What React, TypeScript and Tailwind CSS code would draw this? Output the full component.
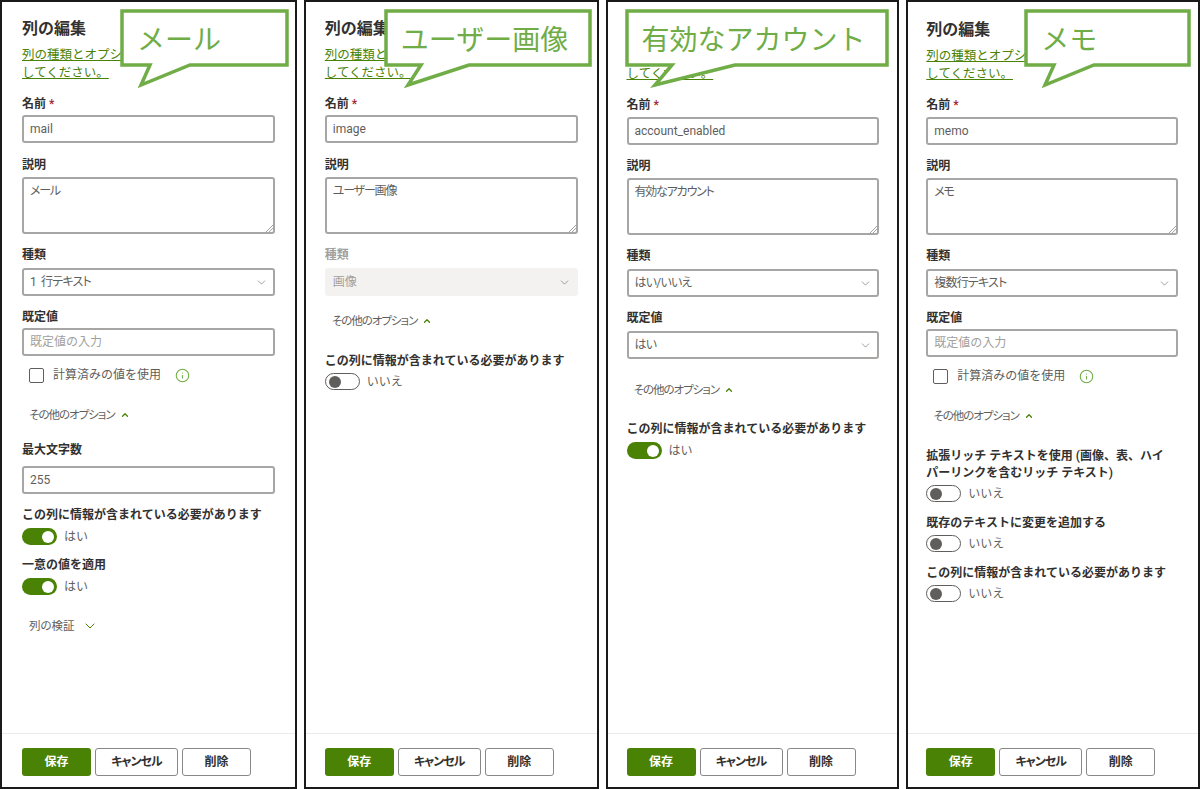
import { ChevronDown, ChevronUp, Info } from 'lucide-react';
import type { ReactNode } from 'react';

const labelClass = 'text-[12px] leading-[16px] font-semibold text-[#323130]';
const boxClass = 'border-2 border-[#a8a6a4] rounded-[3px] bg-white px-[6px] text-[12px] flex items-center';
const palt = '[font-feature-settings:"palt"]';

function Label({ children, className = '' }: { children: ReactNode; className?: string }) {
  return <div className={`${labelClass} ${className}`}>{children}</div>;
}

function TextBox({ value, className = '', muted = false }: { value: string; className?: string; muted?: boolean }) {
  return (
    <div className={`${boxClass} h-[28px] ${muted ? 'text-[#a19f9d]' : 'text-[#605e5c]'} ${className}`}>{value}</div>
  );
}

function TextArea({ value }: { value: string }) {
  return (
    <div className={`relative mt-[4px] h-[57px] border-2 border-[#a8a6a4] rounded-[3px] px-[6px] pt-[4px] text-[12px] leading-[16px] tracking-[-1.2px] text-[#605e5c] ${palt}`}>
      {value}
      <svg className="absolute right-0 bottom-0 w-[8px] h-[8px]" viewBox="0 0 8 8">
        <path d="M1 8 8 1M4 8 8 4" stroke="#8a8886" strokeWidth="0.8" />
      </svg>
    </div>
  );
}

function Select({ value, disabled = false }: { value: string; disabled?: boolean }) {
  return (
    <div
      className={`mt-[5px] h-[28px] rounded-[3px] text-[12px] flex items-center justify-between ${palt} ${
        disabled ? 'pl-[8px] pr-[7px] bg-[#f3f2f1] text-[#a19f9d]' : 'pl-[6px] pr-[5px] border-2 border-[#a8a6a4] text-[#605e5c] tracking-[-0.8px] [word-spacing:3px]'
      }`}
    >
      <span>{value}</span>
      <ChevronDown className="h-[13px] w-[13px] text-[#8a8886]" strokeWidth={1.5} />
    </div>
  );
}

function Toggle({ on, className = 'mt-[5px]' }: { on: boolean; className?: string }) {
  return (
    <div className={`flex items-center gap-[7px] h-[17px] ${className}`}>
      {on ? (
        <div className="w-[35px] h-[17px] rounded-full bg-[#498205] flex items-center justify-end pr-[3px]">
          <div className="w-[12px] h-[12px] rounded-full bg-white" />
        </div>
      ) : (
        <div className="w-[35px] h-[17px] rounded-full border border-[#605e5c] bg-white flex items-center pl-[3px]">
          <div className="w-[12px] h-[12px] rounded-full bg-[#605e5c]" />
        </div>
      )}
      <span className="text-[12px] text-[#605e5c]">{on ? 'はい' : 'いいえ'}</span>
    </div>
  );
}

function MoreOptions({ className = '' }: { className?: string }) {
  return (
    <div className={`flex items-center gap-[5px] pl-[7px] text-[11.5px] leading-[16px] tracking-[-1px] text-[#605e5c] ${palt} ${className}`}>
      <span>その他のオプション</span>
      <ChevronUp className="h-[10px] w-[10px] text-[#498205]" strokeWidth={3} />
    </div>
  );
}

function Computed() {
  return (
    <div className="mt-[11px] ml-[7px] flex items-center h-[16px]">
      <div className="w-[15px] h-[15px] border border-[#605e5c] rounded-[2px]" />
      <span className="ml-[9px] text-[12px] text-[#605e5c]">計算済みの値を使用</span>
      <Info className="ml-[14px] h-[15px] w-[15px] text-[#70ad47]" strokeWidth={1.75} />
    </div>
  );
}

function Callout({ text, left, width, tail }: { text: string; left: number; width: number; tail: [number, number, number] }) {
  const [a, b, c] = tail;
  return (
    <div className="absolute top-[7px] h-[84px]" style={{ left, width }}>
      <svg className="absolute inset-0 w-full h-full" viewBox={`0 0 ${width} 84`}>
        <path
          d={`M2 2H${width - 2}V56H${c}L${b} 76 ${a} 56H2Z`}
          fill="#fff"
          stroke="#70ad47"
          strokeWidth="3.5"
        />
      </svg>
      <div className="absolute left-[17px] top-[12px] text-[28px] leading-[40px] whitespace-nowrap text-[#70ad47]">{text}</div>
    </div>
  );
}

function Panel({ className, children, inset, callout }: { className: string; children: ReactNode; inset: string; callout: ReactNode }) {
  return (
    <div className={`relative h-full bg-white border-2 border-[#1a1a1a] flex flex-col ${className}`}>
      <div className={`flex-1 ${inset}`}>
        <div className="text-[16px] leading-[22px] font-semibold text-[#323130]">列の編集</div>
        <div className="mt-[6px] text-[12.5px] leading-[18px] text-[#498205] underline">
          列の種類とオプションを確認してから、
          <br />
          してください。
        </div>
        {children}
      </div>
      <div className={`h-[39px] box-content border-t border-[#edebe9] flex items-start gap-[4px] pt-[14px] ${palt}`}>
        <div className="w-[69px] h-[28px] rounded-[3px] bg-[#498205] text-white text-[12px] font-semibold flex items-center justify-center">保存</div>
        <div className="w-[83px] h-[28px] rounded-[3px] border border-[#8a8886] text-[#323130] text-[12px] tracking-[-1px] font-semibold flex items-center justify-center">キャンセル</div>
        <div className="w-[69px] h-[28px] rounded-[3px] border border-[#8a8886] text-[#323130] text-[12px] font-semibold flex items-center justify-center">削除</div>
      </div>
      {callout}
    </div>
  );
}

function NameLabel() {
  return <Label className="mt-[14px]">名前 <span className="text-[#a4262c]">*</span></Label>;
}

export default function App() {
  return (
    <div className="w-[1200px] h-[789px] bg-white flex gap-[7px] overflow-hidden" style={{ fontFamily: 'Roboto, "Noto Sans CJK JP", sans-serif' }}>
      <Panel
        className="w-[297px] [&>div:nth-child(2)]:pl-[20px]"
        inset="pl-[20px] pr-[20px] pt-[16px]"
        callout={<Callout text="メール" left={118} width={169} tail={[30, 21, 70]} />}
      >
        <NameLabel />
        <TextBox value="mail" className="mt-[3px]" />
        <Label className="mt-[14px]">説明</Label>
        <TextArea value="メール" />
        <Label className="mt-[13px]">種類</Label>
        <Select value="1 行テキスト" />
        <Label className="mt-[13px]">既定値</Label>
        <TextBox value="既定値の入力" className="mt-[3px]" muted />
        <Computed />
        <MoreOptions className="mt-[24px]" />
        <Label className="mt-[19px]">最大文字数</Label>
        <TextBox value="255" className="mt-[8px]" />
        <Label className="mt-[13px]">この列に情報が含まれている必要があります</Label>
        <Toggle on />
        <Label className="mt-[12px]">一意の値を適用</Label>
        <Toggle on />
        <div className={`mt-[23px] flex items-center gap-[7px] pl-[7px] text-[11.5px] leading-[16px] text-[#605e5c] ${palt}`}>
          <span>列の検証</span>
          <ChevronDown className="h-[16px] w-[16px] text-[#498205]" strokeWidth={1.5} />
        </div>
      </Panel>
      <Panel
        className="w-[295px] [&>div:nth-child(2)]:pl-[19px]"
        inset="pl-[19px] pr-[19px] pt-[16px]"
        callout={<Callout text="ユーザー画像" left={78} width={208} tail={[37, 24, 85]} />}
      >
        <NameLabel />
        <TextBox value="image" className="mt-[3px]" />
        <Label className="mt-[14px]">説明</Label>
        <TextArea value="ユーザー画像" />
        <Label className="mt-[13px] !text-[#a19f9d]">種類</Label>
        <Select value="画像" disabled />
        <MoreOptions className="mt-[17px]" />
        <Label className="mt-[24px]">この列に情報が含まれている必要があります</Label>
        <Toggle on={false} className="mt-[4px]" />
      </Panel>
      <Panel
        className="w-[294px] [&>div:nth-child(2)]:pl-[19px]"
        inset="pl-[19px] pr-[18px] pt-[17px]"
        callout={<Callout text="有効なアカウント" left={17} width={264} tail={[47, 30, 110]} />}
      >
        <NameLabel />
        <TextBox value="account_enabled" className="mt-[4px]" />
        <Label className="mt-[13px]">説明</Label>
        <TextArea value="有効なアカウント" />
        <Label className="mt-[13px]">種類</Label>
        <Select value="はい/いいえ" />
        <Label className="mt-[13px]">既定値</Label>
        <Select value="はい" />
        <MoreOptions className="mt-[23px]" />
        <Label className="mt-[23px]">この列に情報が含まれている必要があります</Label>
        <Toggle on />
      </Panel>
      <Panel
        className="w-[294px] [&>div:nth-child(2)]:pl-[18px]"
        inset="pl-[18px] pr-[20px] pt-[17px]"
        callout={<Callout text="メモ" left={116} width={167} tail={[30, 21, 70]} />}
      >
        <NameLabel />
        <TextBox value="memo" className="mt-[4px]" />
        <Label className="mt-[13px]">説明</Label>
        <TextArea value="メモ" />
        <Label className="mt-[13px]">種類</Label>
        <Select value="複数行テキスト" />
        <Label className="mt-[13px]">既定値</Label>
        <TextBox value="既定値の入力" className="mt-[3px]" muted />
        <Computed />
        <MoreOptions className="mt-[24px]" />
        <div className="mt-[24px] text-[12px] leading-[17px] font-semibold text-[#323130]">
          拡張リッチ テキストを使用 (画像、表、ハイ
          <br />
          パーリンクを含むリッチ テキスト)
        </div>
        <Toggle on={false} className="mt-[3px]" />
        <Label className="mt-[13px]">既存のテキストに変更を追加する</Label>
        <Toggle on={false} className="mt-[4px]" />
        <Label className="mt-[13px]">この列に情報が含まれている必要があります</Label>
        <Toggle on={false} className="mt-[4px]" />
      </Panel>
    </div>
  );
}
